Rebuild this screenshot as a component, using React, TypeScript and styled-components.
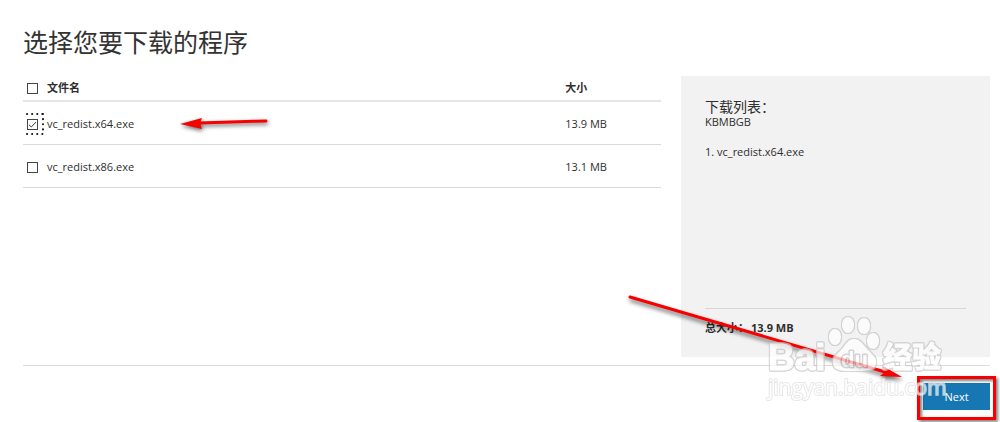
import React, { useState } from "react";
import styled, { createGlobalStyle } from "styled-components";

const GlobalStyle = createGlobalStyle`
  * { box-sizing: border-box; }
  body {
    margin: 0;
    background: #fff;
    color: #2e2e2e;
    font: 11px/14px "Open Sans", "Noto Sans CJK SC", sans-serif;
  }
`;

const Page = styled.main`
  position: relative;
  padding: 24px 10px 12px 23px;
`;

const Title = styled.h1`
  margin: 0 0 16px;
  font-size: 25px;
  line-height: 36px;
  font-weight: 400;
  color: #333;
`;

const Columns = styled.div`
  display: grid;
  grid-template-columns: minmax(0, 1fr) 309px;
  gap: 20px;
`;

const FileTable = styled.table`
  position: relative;
  width: 100%;
  align-self: start;
  border-collapse: separate;
  border-spacing: 0;
  table-layout: fixed;
`;

const HeadCell = styled.th<{ $width?: string }>`
  width: ${(p) => p.$width ?? "auto"};
  height: 26px;
  padding: 0;
  text-align: left;
  font-weight: 700;
  border-bottom: 2px solid #e6e6e6;
`;

const Cell = styled.td`
  height: 43px;
  padding: 2px 0 0;
  border-bottom: 1px solid #d9d9d9;
`;

const CheckFrame = styled.span`
  position: relative;
  display: flex;
  align-items: center;
  width: 18px;
  height: 22px;
  padding-left: 4px;
`;

const Check = styled.input`
  appearance: none;
  display: block;
  width: 11px;
  height: 11px;
  margin: 0;
  border: 1px solid #444;
  background: #fff;
  outline: none;
  &:checked {
    background: #fff
      url("data:image/svg+xml,%3Csvg xmlns='http://www.w3.org/2000/svg' viewBox='0 0 9 9'%3E%3Cpath d='M1 4.8 3.3 7 8 2' fill='none' stroke='%23444'/%3E%3C/svg%3E");
  }
`;

const FocusDots = styled.svg`
  position: absolute;
  left: 3px;
  top: 0;
  pointer-events: none;
`;

const Basket = styled.aside`
  display: flex;
  flex-direction: column;
  min-height: 281px;
  padding: 22px 24px;
  background: #f2f2f2;
`;

const BasketTitle = styled.h2`
  margin: 0;
  font-size: 14px;
  line-height: 18px;
  font-weight: 400;
`;

const BasketUnits = styled.div`
  line-height: 12px;
`;

const BasketList = styled.ol`
  margin: 17px 0 0;
  padding: 0;
  list-style-position: inside;
`;

const Total = styled.p`
  display: flex;
  gap: 2px;
  margin: auto 0 0;
  padding-top: 12px;
  border-top: 1px solid #d6d6d6;
  font-weight: 700;
`;

const Footer = styled.footer`
  display: flex;
  justify-content: flex-end;
  margin-top: 8px;
  padding-top: 17px;
  border-top: 1px solid #dcdcdc;
`;

const NextSlot = styled.div`
  position: relative;
`;

const NextButton = styled.button`
  display: block;
  width: 67px;
  height: 27px;
  padding: 0;
  border: 0;
  background: #1777b3;
  color: #fff;
  font: inherit;
`;

const Highlight = styled.div`
  position: absolute;
  inset: -7px -6px -10px;
  border: 3px solid #f80000;
  box-shadow: 2px 2px 3px rgba(0, 0, 0, 0.5), inset 2px 2px 3px rgba(0, 0, 0, 0.5);
  pointer-events: none;
`;

const RowArrow = styled.svg`
  position: absolute;
  left: 151px;
  top: 36px;
  overflow: visible;
  pointer-events: none;
  filter: drop-shadow(1px 2px 2px rgba(0, 0, 0, 0.6));
`;

const NextArrow = styled.svg`
  position: absolute;
  right: 90px;
  bottom: 32px;
  overflow: visible;
  pointer-events: none;
  filter: drop-shadow(1px 3px 2px rgba(0, 0, 0, 0.6));
`;

const Watermark = styled.svg`
  position: absolute;
  right: 50px;
  bottom: 12px;
  overflow: visible;
  pointer-events: none;
  opacity: 0.7;

  text {
    fill: #fff;
    stroke-linejoin: round;
  }
`;

const Brand = styled.g`
  font-family: "Liberation Sans", "Noto Sans CJK SC", sans-serif;
  font-weight: 700;
  filter: drop-shadow(1px 0 0 #c6c6c6) drop-shadow(-1px 0 0 #c6c6c6)
    drop-shadow(0 1px 0 #c6c6c6) drop-shadow(0 -1px 0 #c6c6c6);

  text {
    stroke: #fff;
    stroke-width: 1px;
  }
`;

const PawLabel = styled.text`
  font-family: "Liberation Sans", sans-serif;
  font-weight: 700;
  stroke: #c6c6c6;
  stroke-width: 3px;
  paint-order: stroke;
`;

const SiteAddress = styled.text`
  font-family: "Open Sans", sans-serif;
  stroke: #dedede;
  stroke-width: 2px;
  paint-order: stroke;
`;

const files = [
  { name: "vc_redist.x64.exe", size: 13.9 },
  { name: "vc_redist.x86.exe", size: 13.1 },
];

export default function App() {
  const [picked, setPicked] = useState<string[]>(["vc_redist.x64.exe"]);
  const chosen = files.filter((f) => picked.includes(f.name));
  const total = chosen.reduce((sum, f) => sum + f.size, 0);
  const toggle = (name: string) =>
    setPicked((p) => (p.includes(name) ? p.filter((n) => n !== name) : [...p, name]));

  return (
    <>
      <GlobalStyle />
      <Page>
        <Title>选择您要下载的程序</Title>
        <Columns>
          <FileTable>
            <thead>
              <tr>
                <HeadCell $width="24px">
                  <CheckFrame>
                    <Check
                      type="checkbox"
                      aria-label="全选"
                      checked={chosen.length === files.length}
                      onChange={(e) => setPicked(e.target.checked ? files.map((f) => f.name) : [])}
                    />
                  </CheckFrame>
                </HeadCell>
                <HeadCell>文件名</HeadCell>
                <HeadCell $width="15%">大小</HeadCell>
              </tr>
            </thead>
            <tbody>
              {files.map((f, i) => (
                <tr key={f.name}>
                  <Cell>
                    <CheckFrame>
                      <Check
                        id={`file-${i}`}
                        type="checkbox"
                        checked={picked.includes(f.name)}
                        onChange={() => toggle(f.name)}
                      />
                      {i === 0 && (
                        <FocusDots width="18" height="22" aria-hidden="true">
                          <path
                            d="M1 1h16M1 21h16M17 1v20"
                            fill="none"
                            stroke="#111"
                            strokeWidth="2"
                            strokeLinecap="round"
                            strokeDasharray="0.1 5"
                          />
                        </FocusDots>
                      )}
                    </CheckFrame>
                  </Cell>
                  <Cell>
                    <label htmlFor={`file-${i}`}>{f.name}</label>
                  </Cell>
                  <Cell>
                    {f.size} MB
                    {i === 0 && (
                      <RowArrow width="100" height="24" aria-hidden="true">
                        <path d="M92 9 25 11" stroke="#f80000" strokeWidth="3" strokeLinecap="round" />
                        <path d="M6 12 28 6 26 11 28 17Z" fill="#f80000" />
                      </RowArrow>
                    )}
                  </Cell>
                </tr>
              ))}
            </tbody>
          </FileTable>
          <Basket>
            <BasketTitle>下载列表：</BasketTitle>
            <BasketUnits>KBMBGB</BasketUnits>
            <BasketList>
              {chosen.map((f) => (
                <li key={f.name}>{f.name}</li>
              ))}
            </BasketList>
            <Total>
              <span>总大小：</span>
              <span>{total.toFixed(1)} MB</span>
            </Total>
          </Basket>
        </Columns>
        <Footer>
          <NextSlot>
            <NextButton type="button">Next</NextButton>
            <Highlight />
          </NextSlot>
        </Footer>

        <NextArrow width="280" height="100" aria-hidden="true">
          <path d="M0 7 255 82" stroke="#f80000" strokeWidth="3" strokeLinecap="round" />
          <path d="M272 87 253 76 255 82 250 86Z" fill="#f80000" />
        </NextArrow>
        <Watermark width="182" height="100" aria-label="Baidu 经验 jingyan.baidu.com">
          <Brand>
            <text x="0" y="60" fontSize="37">
              Bai
            </text>
            <g fill="#fff">
              <ellipse cx="67" cy="27" rx="6" ry="8" />
              <ellipse cx="80" cy="15" rx="6" ry="8" />
              <ellipse cx="96" cy="16" rx="6" ry="8" />
              <ellipse cx="105" cy="31" rx="6" ry="8" />
              <path d="M86 29c7 0 9 6 14 11s9 8 8 13c-1 8-8 8-22 8s-20 0-21-8c-1-5 3-8 8-13s6-11 13-11Z" />
            </g>
            <text x="115" y="58" fontSize="29">
              经验
            </text>
          </Brand>
          <PawLabel x="73" y="57" fontSize="22">
            du
          </PawLabel>
          <SiteAddress x="0" y="85" fontSize="21">
            jingyan.baidu.com
          </SiteAddress>
        </Watermark>
      </Page>
    </>
  );
}
